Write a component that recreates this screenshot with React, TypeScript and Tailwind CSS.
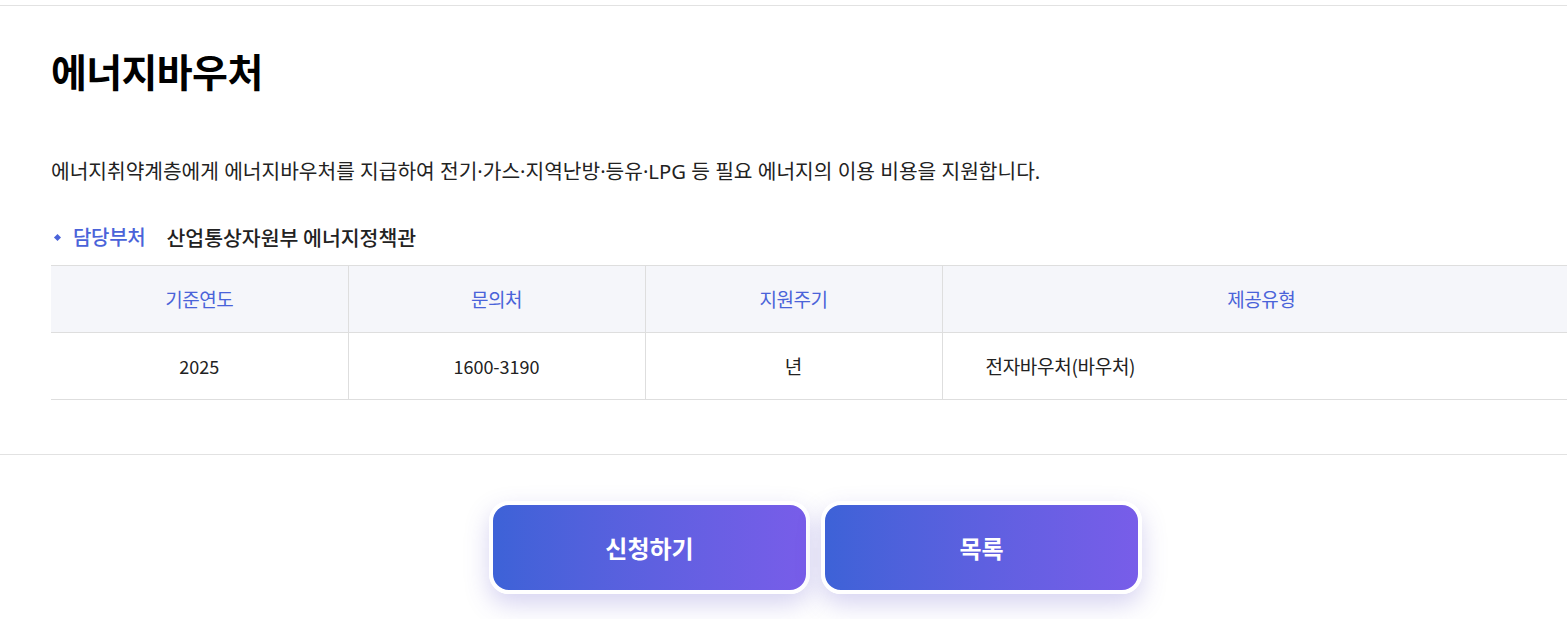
const font = { fontFamily: '"Noto Sans CJK KR", "Noto Sans", sans-serif' };
const mixed = { fontFamily: '"Noto Sans", "Noto Sans CJK KR", sans-serif' };

const cols = [
  { head: "기준연도", value: "2025", cls: "text-[18px]" },
  { head: "문의처", value: "1600-3190", cls: "text-[18px]" },
  { head: "지원주기", value: "년", cls: "text-[19px]" },
];

export default function App() {
  return (
    <div className="w-full overflow-hidden bg-white text-[#222]" style={font}>
      <div className="w-[1631px] pt-[5px]">
        <div className="border-t border-[#e2e2e2] px-[51px] pt-[37px]">
          <h1 className="text-[39px] font-bold leading-[54px] tracking-[-0.6px] text-black">
            에너지바우처
          </h1>

          <p className="mt-[60px] text-[20.3px] leading-[28px] text-[#222]" style={mixed}>
            에너지취약계층에게 에너지바우처를 지급하여 전기·가스·지역난방·등유·LPG 등 필요 에너지의 이용 비용을 지원합니다.
          </p>

          <div className="mt-[38px] flex items-center text-[20px] font-medium leading-[28px]">
            <span className="ml-[4px] mr-[13px] h-[5px] w-[5px] rotate-45 bg-[#4a63d9]" />
            <span className="tracking-[-0.3px] text-[#4a63d9]">담당부처</span>
            <span className="ml-[21px] text-[20.5px] text-[#222]">산업통상자원부 에너지정책관</span>
          </div>

          <table className="mt-[14px] w-full border-collapse">
            <thead>
              <tr className="h-[67px] bg-[#f5f6fa]">
                {cols.map((c) => (
                  <th
                    key={c.head}
                    className="w-[297px] border-y border-r border-[#dedede] text-[19px] font-normal tracking-[-0.5px] text-[#4a63d9]"
                  >
                    {c.head}
                  </th>
                ))}
                <th className="border-y border-[#dedede] text-[19px] font-normal tracking-[-0.5px] text-[#4a63d9]">
                  제공유형
                </th>
              </tr>
            </thead>
            <tbody>
              <tr className="h-[67px]">
                {cols.map((c) => (
                  <td key={c.head} className={`${c.cls} border-b border-r border-[#dedede] text-center`}>
                    {c.value}
                  </td>
                ))}
                <td className="border-b border-[#dedede] pl-[43px] text-left text-[19px] tracking-[-0.3px]">
                  전자바우처(바우처)
                </td>
              </tr>
            </tbody>
          </table>
        </div>

        <div className="mt-[54px] border-t border-[#e2e2e2]" />

        <div className="flex justify-center gap-[11px] pt-[46px] pb-[30px]">
          {["신청하기", "목록"].map((t) => (
            <button
              key={t}
              className="h-[93px] w-[321px] rounded-[20px] border-4 border-white bg-gradient-to-r from-[#3d62d7] to-[#785de9] text-[24px] font-bold text-white shadow-[0_10px_24px_rgba(90,80,200,0.25)]"
            >
              {t}
            </button>
          ))}
        </div>
      </div>
    </div>
  );
}
